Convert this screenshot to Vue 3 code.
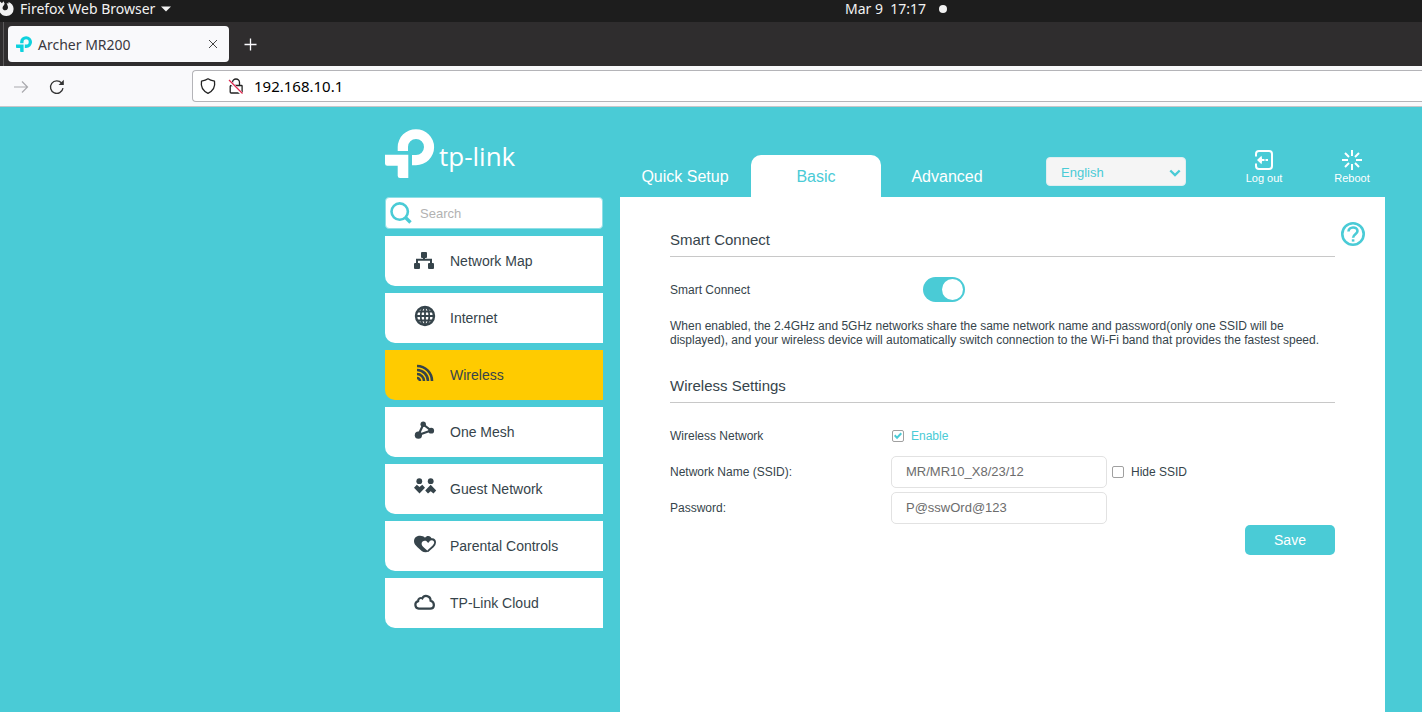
<script setup>
import { ref } from 'vue'

const tabs = ['Quick Setup', 'Basic', 'Advanced']
const activeTab = ref('Basic')

const menu = [
  { id: 'map', label: 'Network Map' },
  { id: 'internet', label: 'Internet' },
  { id: 'wireless', label: 'Wireless' },
  { id: 'mesh', label: 'One Mesh' },
  { id: 'guest', label: 'Guest Network' },
  { id: 'parental', label: 'Parental Controls' },
  { id: 'cloud', label: 'TP-Link Cloud' },
]
const activeMenu = ref('wireless')

const language = ref('English')
const search = ref('')
const smartConnect = ref(true)
const enabled = ref(true)
const hideSsid = ref(false)
const ssid = ref('MR/MR10_X8/23/12')
const password = ref('P@sswOrd@123')
const address = ref('192.168.10.1')
</script>

<template>
  <div class="screen">
    <div class="topbar">
      <button class="app-menu" type="button">
        <svg class="fox" width="14" height="18" viewBox="0 0 14 18">
          <path d="M0 1.5 2 3.2 3.4 1.2 4.6 3.6C4.5 5.2 3 5.8 2.6 7.4c-.3 1.6 1 2.9 2.6 2.9 2.2 0 3.3-2 2.6-4.1L6.6 3l1.8.8L8.6 2c3.200 1.200 5 4 5 7a7 7 0 0 1-7 7A7.600 7.600 0 0 1 0 12.500Z" fill="#f2f2f2" />
        </svg>
        <span>Firefox Web Browser</span>
        <svg width="10" height="6" viewBox="0 0 10 6"><path d="M0 0.500h10L5 5.500Z" fill="#f2f2f2" /></svg>
      </button>
      <div class="clock">
        <span>Mar 9&nbsp; 17:17</span>
        <i class="dot"></i>
      </div>
    </div>

    <div class="tabstrip">
      <div class="browser-tab">
        <svg width="16" height="16" viewBox="0 0 49 49" fill="#0ed2de">
          <path d="M12.700 22V18A18.200 18 0 1 1 31 36.500H27V26H31A8 8 0 1 0 23 18V22Z" />
          <path d="M0 25.700H23.300V49H15Q12.700 49 12.700 46.700V36.700H2.300Q0 36.700 0 34.400Z" />
        </svg>
        <span class="title">Archer MR200</span>
        <button type="button" aria-label="Close tab">
          <svg width="10" height="10" viewBox="0 0 10 10"><path d="M1 1l8 8M9 1 1 9" stroke="#444" stroke-width="1" /></svg>
        </button>
      </div>
      <button class="new-tab" type="button" aria-label="New tab">
        <svg width="13" height="13" viewBox="0 0 13 13"><path d="M6.500 .5v12M.5 6.500h12" stroke="#fbfbfe" stroke-width="1.300" /></svg>
      </button>
    </div>

    <div class="toolbar">
      <div class="nav-buttons">
        <button type="button" aria-label="Forward" disabled>
          <svg width="16" height="16" viewBox="0 0 16 16"><path d="M1 8h13.500M9 2.500 14.500 8 9 13.500" fill="none" stroke="#a9a9ad" stroke-width="1.200" /></svg>
        </button>
        <button type="button" aria-label="Reload">
          <svg width="16" height="16" viewBox="0 0 16 16"><path d="M14 9.200A6.300 6.300 0 1 1 12.600 4" fill="none" stroke="#333" stroke-width="1.300" /><path d="M14.800 .8V6H9.600Z" fill="#333" /></svg>
        </button>
      </div>
      <div class="urlbar">
        <svg width="16" height="16" viewBox="0 0 16 16"><path d="M8 .8C6.200 2.200 4 2.800 1.500 3.200 .6 8.500 3 13 8 15.300 13 13 15.400 8.500 14.500 3.200 12 2.800 9.800 2.200 8 .8Z" fill="none" stroke="#222" stroke-width="1.300" stroke-linejoin="round" /></svg>
        <svg width="16" height="16" viewBox="0 0 16 16" fill="none">
          <path d="M4.500 7V4.500a3.500 3.500 0 0 1 7 0V7M3.200 7.500h10.300a.6.600 0 0 1 .6.600V14a1 1 0 0 1-1 1H3.200a1 1 0 0 1-1-1V8.300a1 1 0 0 1 1-.8Z" stroke="#222" stroke-width="1.300" />
          <path d="M.8 2.500 14 16" stroke="#fff" stroke-width="3" />
          <path d="M1 2 14.500 15.500" stroke="#e22850" stroke-width="1.300" />
        </svg>
        <input v-model="address" type="text" aria-label="Address" />
      </div>
    </div>

    <main class="page">
      <aside class="side">
        <a class="logo" href="#" aria-label="tp-link">
          <svg width="49" height="49" viewBox="0 0 49 49" fill="#fff">
            <path d="M12.700 22V18A18.200 18 0 1 1 31 36.200H27V26H31A8 8 0 1 0 23 18V22Z" />
            <path d="M0 25.700H23.300V49H15Q12.700 49 12.700 46.700V36.700H2.300Q0 36.700 0 34.400Z" />
          </svg>
          <span>tp-link</span>
        </a>

        <label class="search">
          <svg width="22" height="22" viewBox="0 0 22 22" fill="none" stroke="#4acbd6">
            <circle cx="9.700" cy="9.600" r="8.200" stroke-width="2.600" />
            <path d="m15 15 5.500 5.500" stroke-width="3.400" />
          </svg>
          <input v-model="search" type="text" placeholder="Search" aria-label="Search" />
        </label>

        <nav class="menu">
          <a
            v-for="item in menu"
            :key="item.id"
            href="#"
            :class="{ active: item.id === activeMenu }"
            @click.prevent="activeMenu = item.id"
          >
            <svg width="22" height="22" viewBox="0 0 22 22" fill="#36444b">
              <template v-if="item.id === 'map'">
                <rect x="7" y="2" width="6" height="6" rx="1" />
                <rect x="0" y="13" width="6" height="6" rx="1" />
                <rect x="14" y="13" width="6" height="6" rx="1" />
                <path d="M3 14V9.800H17V14M10 7v3" fill="none" stroke="#36444b" stroke-width="2" />
              </template>
              <template v-else-if="item.id === 'internet'">
                <g fill="none" stroke="#36444b" stroke-width="1.800">
                  <circle cx="11" cy="9" r="9" stroke-width="2.400" />
                  <ellipse cx="11" cy="9" rx="4.300" ry="9" />
                  <path d="M11 0v18M2 9h18M3.500 4.500h15M3.500 13.500h15" />
                </g>
              </template>
              <template v-else-if="item.id === 'wireless'">
                <g fill="none" stroke="#36444b" stroke-width="2.600">
                  <path d="M3 2A15 15 0 0 1 18 17M3 6A11 11 0 0 1 14 17M3 10A7 7 0 0 1 10 17M3 14A3 3 0 0 1 6 17" />
                </g>
              </template>
              <template v-else-if="item.id === 'mesh'">
                <path d="M9.300 3.500 17 9.500 4.300 14Z" fill="none" stroke="#36444b" stroke-width="2.200" />
                <circle cx="9.200" cy="3.200" r="2.700" />
                <circle cx="17.200" cy="9.700" r="2.900" />
                <circle cx="4.400" cy="14.200" r="3.600" />
              </template>
              <template v-else-if="item.id === 'guest'">
                <circle cx="5.300" cy="3.200" r="2.900" />
                <circle cx="16.700" cy="3.200" r="2.900" />
                <path d="M0 9.800 2.800 6.700 5.500 9 8.300 6.700 11 9.800 5.500 15.500Z" />
                <path d="M16.700 6.700 22.200 12.500 19.500 15.500 16.700 13.300 14 15.500 11.200 12.500Z" />
              </template>
              <template v-else-if="item.id === 'parental'">
                <path d="M11 2.800C8-.6 0 .3 0 6.300c0 2.500 1.500 4 3.500 6L8 16.300c2 1.200 5 1.200 7 0L18 5C17.500.5 13-.3 11 2.800Z" />
                <path d="M13.800 7.300C12.500 4.800 7.600 5 7.600 8.800c0 1.500 1 2.500 2 3.500l4.200 3.800L19 11.500c1.200-1.200 2.100-2.300 2.100-3.900 0-4.200-5.600-4.600-7.300-.3Z" fill="#fff" />
                <path d="M13.800 16.200 19 11.500c1.200-1.200 2.100-2.300 2.100-3.900 0-4.200-5.600-4.600-7.300-.3" fill="none" stroke="#36444b" stroke-width="1.800" />
              </template>
              <template v-else>
                <path d="M4.800 16.700a3.900 3.900 0 0 1-.7-7.600C4 6.500 6.500 5.400 8.300 6.400 10 2.600 16.600 3.200 16.600 8.700c4.600 1.400 4.300 8-.4 8Z" fill="none" stroke="#36444b" stroke-width="2.200" />
              </template>
            </svg>
            <span>{{ item.label }}</span>
          </a>
        </nav>
      </aside>

      <div class="content">
        <header class="head">
          <nav class="tabs">
            <a
              v-for="tab in tabs"
              :key="tab"
              href="#"
              :class="{ active: tab === activeTab }"
              @click.prevent="activeTab = tab"
            >{{ tab }}</a>
          </nav>
          <div class="language">
            <select v-model="language" aria-label="Language">
              <option>English</option>
            </select>
            <svg width="12" height="8" viewBox="0 0 12 8"><path d="m1.300 1.500 4.700 4.500 4.700-4.500" fill="none" stroke="#4acbd6" stroke-width="2.400" /></svg>
          </div>
          <div class="actions">
            <button type="button">
              <svg width="20" height="20" viewBox="0 0 20 20" fill="none" stroke="#fff" stroke-width="2">
                <path d="M2 6.500V4a3 3 0 0 1 3-3h10a3 3 0 0 1 3 3v12a3 3 0 0 1-3 3H5a3 3 0 0 1-3-3v-2.500" />
                <path d="M8 10h2.500M11.500 10h2.500" />
                <path d="M3 10 7.500 5.800 8 8.500V11.500L7.500 14.200Z" fill="#fff" stroke="none" />
              </svg>
              <span>Log out</span>
            </button>
            <button type="button">
              <svg width="20" height="20" viewBox="0 0 20 20" fill="none" stroke="#fff" stroke-width="2">
                <path d="M10 0v6M10 14v6M0 10h6M14 10h6M3 3l4 4M13 13l4 4M17 3l-4 4M7 13l-4 4" />
              </svg>
              <span>Reboot</span>
            </button>
          </div>
        </header>

        <section class="panel">
          <button class="help" type="button" aria-label="Help">
            <svg width="24" height="24" viewBox="0 0 24 24" fill="none" stroke="#4acbd6">
              <circle cx="12" cy="12" r="10.700" stroke-width="2.600" />
              <path d="M7.500 9.600C7.500 4.200 16.500 4.200 16.500 9c0 3.300-4.400 3.400-4.400 6.800" stroke-width="2.600" />
              <path d="M10.800 17.300h2.600v2.300H10.800Z" fill="#4acbd6" stroke="none" />
            </svg>
          </button>

          <h2>Smart Connect</h2>
          <div class="form">
            <div class="row">
              <label for="smart">Smart Connect</label>
              <input id="smart" v-model="smartConnect" class="switch" type="checkbox" role="switch" />
            </div>
          </div>
          <p>
            When enabled, the 2.4GHz and 5GHz networks share the same network name and password(only one SSID will be displayed), and your wireless device will automatically switch connection to the Wi-Fi band that provides the fastest speed.
          </p>

          <h2>Wireless Settings</h2>
          <div class="form">
            <div class="row">
              <span>Wireless Network</span>
              <label class="check enable"><input v-model="enabled" type="checkbox" />Enable</label>
            </div>
            <div class="row">
              <label for="ssid">Network Name (SSID):</label>
              <div class="fields">
                <input id="ssid" v-model="ssid" class="text" type="text" />
                <label class="check"><input v-model="hideSsid" type="checkbox" />Hide SSID</label>
              </div>
            </div>
            <div class="row">
              <label for="password">Password:</label>
              <input id="password" v-model="password" class="text" type="text" />
            </div>
          </div>
          <div class="submit">
            <button type="button">Save</button>
          </div>
        </section>
      </div>
    </main>
  </div>
</template>

<style>
body {
  margin: 0;
  background: #4acbd6;
}
</style>

<style scoped>
* {
  box-sizing: border-box;
}
button,
input,
select {
  margin: 0;
  padding: 0;
  border: 0;
  background: none;
  font: inherit;
  color: inherit;
}
svg {
  display: block;
  flex: none;
  overflow: visible;
}
a {
  text-decoration: none;
}

.screen {
  display: flex;
  flex-direction: column;
  min-height: 100vh;
  overflow: hidden;
  background: #4acbd6;
  color: #36444b;
  font-family: "Liberation Sans", Arial, sans-serif;
  font-size: 12px;
}

.topbar,
.tabstrip,
.toolbar {
  font-family: "Noto Sans", "Open Sans", sans-serif;
  font-size: 14px;
}
.topbar {
  display: grid;
  grid-template-columns: 845px 1fr;
  height: 22px;
  padding-bottom: 6px;
  background: #1d1d1d;
  color: #f2f2f2;
  line-height: 16px;
}
.app-menu {
  display: flex;
  align-items: center;
  gap: 6px;
}
.clock {
  display: flex;
  align-items: center;
  gap: 13px;
}
.dot {
  width: 8px;
  height: 8px;
  border-radius: 50%;
  background: #f2f2f2;
}

.tabstrip {
  display: flex;
  align-items: center;
  height: 44px;
  padding-left: 3px;
  background: #2f2d2e;
}
.tabstrip::before {
  content: "";
  width: 1px;
  height: 44px;
  margin-right: 4px;
  background: #5c5a5b;
}
.browser-tab {
  display: flex;
  align-items: center;
  gap: 6px;
  width: 221px;
  height: 36px;
  padding: 0 11px 0 8px;
  border-radius: 4px;
  background: #f9f9fb;
  color: #3a3840;
}
.title {
  flex: 1;
}
.new-tab {
  margin-left: 15px;
}

.toolbar {
  display: flex;
  height: 41px;
  padding-top: 4px;
  border-bottom: 1px solid #c6c6c9;
  background: #f9f9fb;
}
.nav-buttons {
  display: flex;
  gap: 20px;
  width: 192px;
  height: 32px;
  padding: 1px 0 0 13px;
}
.urlbar {
  display: flex;
  flex: 1;
  align-items: center;
  gap: 12px;
  height: 32px;
  padding-left: 7px;
  border: 1px solid #b4b4b8;
  border-right: 0;
  border-radius: 4px 0 0 4px;
  background: #fff;
}
.urlbar input {
  flex: 1;
  min-width: 0;
  margin-left: -2px;
  color: #000;
  font-size: 15px;
  outline: 0;
}

.page {
  display: grid;
  flex: 1;
  grid-template-columns: 218px 1fr;
  gap: 17px;
  padding: 0 37px 0 385px;
}
.logo {
  display: flex;
  gap: 5px;
  height: 90px;
  padding-top: 22px;
  color: #fff;
  font-family: "Open Sans", "Noto Sans", sans-serif;
  font-size: 26px;
  font-weight: 500;
  line-height: 54px;
}
.search {
  display: flex;
  align-items: center;
  gap: 8px;
  height: 32px;
  padding-left: 4px;
  border: 1px solid #8fdfe6;
  border-radius: 4px;
  background: #fff;
}
.search input {
  flex: 1;
  min-width: 0;
  font-size: 13px;
  outline: 0;
}
.search input::placeholder {
  color: #b2b2b2;
  opacity: 1;
}
.menu {
  display: grid;
  gap: 7px;
  margin-top: 7px;
}
.menu a {
  display: flex;
  align-items: center;
  gap: 14px;
  height: 50px;
  padding-left: 29px;
  border-radius: 0 0 0 10px;
  background: #fff;
  color: #36444b;
  font-size: 14px;
}
.menu a.active {
  background: #ffcb00;
}

.content {
  display: flex;
  flex-direction: column;
  min-width: 0;
}
.head {
  display: flex;
  align-items: flex-end;
  height: 90px;
}
.tabs {
  display: flex;
  gap: 1px;
}
.tabs a {
  width: 130px;
  padding-top: 2px;
  border-radius: 10px 10px 0 0;
  color: #fff;
  font-size: 16px;
  line-height: 40px;
  text-align: center;
}
.tabs a.active {
  background: #fff;
  color: #4acbd6;
}
.language {
  position: relative;
  width: 140px;
  height: 29px;
  margin: 0 0 11px 34px;
}
.language select {
  width: 100%;
  height: 100%;
  padding: 2px 0 0 14px;
  border: 1px solid #e0eef0;
  border-radius: 4px;
  background: #f5f5f5;
  color: #4acbd6;
  font-size: 13px;
  appearance: none;
}
.language svg {
  position: absolute;
  top: 12px;
  right: 5px;
  pointer-events: none;
}
.actions {
  display: flex;
  flex: 1;
  justify-content: flex-end;
  gap: 28px;
  margin-right: 3px;
  padding-bottom: 12px;
}
.actions button {
  display: flex;
  flex-direction: column;
  align-items: center;
  gap: 2px;
  width: 60px;
  color: #fff;
  font-size: 11px;
  line-height: 13px;
}

.panel {
  position: relative;
  flex: 1;
  padding: 27px 50px 0;
  background: #fff;
}
.help {
  position: absolute;
  top: 25px;
  right: 20px;
}
h2 {
  margin: 0;
  border-bottom: 1px solid #c8c8c8;
  font-size: 15px;
  font-weight: 400;
  line-height: 32px;
}
p {
  margin: 13px 0 23px;
  line-height: 14px;
}
.form {
  display: grid;
  gap: 4px;
  padding-top: 17px;
}
.row {
  display: grid;
  grid-template-columns: 221px 1fr;
  align-items: center;
  height: 32px;
}
.switch {
  width: 42px;
  height: 25px;
  margin: 0 0 1px 32px;
  padding: 2px;
  border-radius: 13px;
  background: #c8c8c8;
  appearance: none;
}
.switch::before {
  content: "";
  display: block;
  width: 21px;
  height: 21px;
  border-radius: 50%;
  background: #fff;
}
.switch:checked {
  background: #4acbd6;
}
.switch:checked::before {
  margin-left: 17px;
}
.fields {
  display: flex;
  align-items: center;
  gap: 5px;
}
.text {
  width: 216px;
  height: 32px;
  padding: 0 14px 1px;
  border: 1px solid #e2e2e2;
  border-radius: 5px;
  background: #fff;
  color: #6c6c6c;
  font-size: 13px;
}
.check {
  display: flex;
  align-items: center;
  gap: 7px;
}
.enable {
  padding-left: 1px;
  color: #4acbd6;
}
.check input {
  display: grid;
  place-items: center;
  width: 12px;
  height: 12px;
  border: 1px solid #a0a0a0;
  border-radius: 2px;
  background: #fff;
  appearance: none;
}
.check input:checked::before {
  content: "";
  width: 8px;
  height: 8px;
  background: #4acbd6;
  clip-path: polygon(0 50%, 16% 32%, 38% 52%, 82% 6%, 100% 24%, 38% 90%);
}
.submit {
  display: flex;
  justify-content: flex-end;
  margin-top: 1px;
}
.submit button {
  width: 90px;
  height: 30px;
  border-radius: 5px;
  background: #4acbd6;
  color: #fff;
  font-size: 14px;
}
</style>
